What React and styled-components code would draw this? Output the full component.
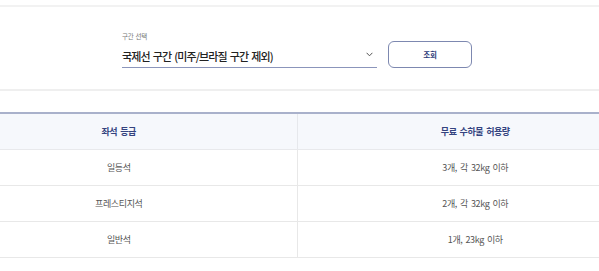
import React, { useState } from 'react';
import styled, { createGlobalStyle } from 'styled-components';

const GlobalStyle = createGlobalStyle`
  html, body {
    margin: 0;
    padding: 0;
    background: #ffffff;
    overflow: hidden;
  }
  body {
    font-family: "Noto Sans CJK KR", "Noto Sans", sans-serif;
    color: #333;
  }
`;

const rows = [
  { grade: '일등석', allowance: '3개, 각 32kg 이하' },
  { grade: '프레스티지석', allowance: '2개, 각 32kg 이하' },
  { grade: '일반석', allowance: '1개, 23kg 이하' },
];

export default function App() {
  const [route] = useState('국제선 구간 (미주/브라질 구간 제외)');

  return (
    <>
      <GlobalStyle />
      <Page>
        <FilterBar>
          <Field>
            <Label>구간 선택</Label>
            <Select>
              <span>{route}</span>
              <svg width="7" height="5" viewBox="0 0 7 5">
                <path d="M0.6 0.8 L3.5 3.8 L6.4 0.8" fill="none" stroke="#555" strokeWidth="1" />
              </svg>
            </Select>
          </Field>
          <SearchButton>조회</SearchButton>
        </FilterBar>

        <Table>
          <thead>
            <tr>
              <Th>좌석 등급</Th>
              <Th>무료 수하물 허용량</Th>
            </tr>
          </thead>
          <tbody>
            {rows.map((r) => (
              <tr key={r.grade}>
                <Td>{r.grade}</Td>
                <Td>{r.allowance}</Td>
              </tr>
            ))}
          </tbody>
        </Table>
      </Page>
    </>
  );
}

const Page = styled.div`
  width: 712px;
  margin-left: -59px;
  padding-top: 5px;
`;

const FilterBar = styled.div`
  display: flex;
  justify-content: center;
  align-items: flex-end;
  gap: 11px;
  height: 61px;
  padding-bottom: 21px;
  border-top: 2px solid #f2f2f2;
  border-bottom: 2px solid #efefef;
`;

const Field = styled.div`
  width: 255px;
  display: flex;
  flex-direction: column;
`;

const Label = styled.div`
  font-size: 6.5px;
  line-height: 8px;
  letter-spacing: -0.3px;
  word-spacing: 1px;
  color: #777;
  margin-bottom: 7px;
`;

const Select = styled.div`
  display: flex;
  align-items: center;
  justify-content: space-between;
  height: 17px;
  padding-right: 4px;
  padding-bottom: 3px;
  border-bottom: 1px solid #8b95bb;
  font-size: 11px;
  letter-spacing: -0.9px;
  word-spacing: 1.5px;
  font-weight: 500;
  color: #222;

  svg {
    margin-bottom: 2px;
  }
`;

const SearchButton = styled.button`
  width: 84px;
  height: 27px;
  border: 1px solid #7d88b0;
  border-radius: 6px;
  background: #fff;
  color: #2b3a78;
  font-family: inherit;
  font-size: 7.5px;
  font-weight: 700;
  letter-spacing: -0.2px;
  padding: 0;
  cursor: pointer;
`;

const Table = styled.table`
  width: 100%;
  margin-top: 21px;
  border-collapse: collapse;
  table-layout: fixed;
  border-top: 2px solid #a9b1cb;
`;

const Th = styled.th`
  height: 35px;
  padding: 0;
  background: #f6f8fc;
  color: #34437f;
  font-size: 9px;
  letter-spacing: -0.45px;
  word-spacing: 1.5px;
  font-weight: 700;
  border-bottom: 1px solid #e8e9ec;
  & + & {
    border-left: 1px solid #e6e8ec;
  }
`;

const Td = styled.td`
  height: 35px;
  padding: 0;
  text-align: center;
  color: #555;
  font-size: 9px;
  letter-spacing: -0.4px;
  word-spacing: 1.5px;
  border-bottom: 1px solid #e8e8e8;
  & + & {
    border-left: 1px solid #e8e8e8;
  }
`;
